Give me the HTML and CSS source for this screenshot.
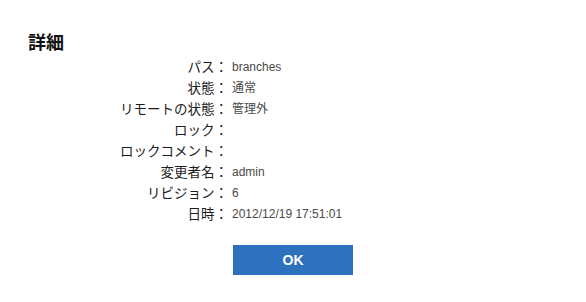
FILE: index.html
```html
<!DOCTYPE html>
<html lang="ja">
<head>
<meta charset="utf-8">
<link rel="stylesheet" href="styles.css">
</head>
<body>
<div class="dialog">
  <h1 class="title">詳細</h1>
  <dl class="details">
    <dt>パス：</dt><dd>branches</dd>
    <dt>状態：</dt><dd>通常</dd>
    <dt>リモートの状態：</dt><dd>管理外</dd>
    <dt>ロック：</dt><dd></dd>
    <dt>ロックコメント：</dt><dd></dd>
    <dt>変更者名：</dt><dd>admin</dd>
    <dt>リビジョン：</dt><dd>6</dd>
    <dt>日時：</dt><dd>2012/12/19 17:51:01</dd>
  </dl>
  <div class="actions">
    <button class="ok">OK</button>
  </div>
</div>
</body>
</html>
```

FILE: styles.css
```css
html, body {
  margin: 0;
  padding: 0;
  background: #fff;
}
body {
  font-family: "Liberation Sans", "Noto Sans CJK JP", sans-serif;
  color: #1a1a1a;
}
.dialog {
  padding: 31px 0 0 28px;
}
.title {
  margin: 0;
  font-size: 18px;
  line-height: 24px;
  font-weight: bold;
  color: #111;
}
.details {
  display: grid;
  grid-template-columns: 200px 1fr;
  column-gap: 4px;
  margin: 2px 0 0 0;
  line-height: 21px;
}
.details dt {
  text-align: right;
  color: #1c1c1c;
  font-size: 13.5px;
}
.details dd {
  margin: 0;
  color: #4a4a4a;
  font-size: 12px;
  min-height: 21px;
}
.actions {
  display: flex;
  justify-content: center;
  margin: 20px 0 0 -28px;
}
.ok {
  width: 120px;
  height: 30px;
  border: 0;
  background: #2d70bd;
  color: #fff;
  font-family: "Liberation Sans", sans-serif;
  font-weight: bold;
  font-size: 14px;
  padding: 0;
}
```
